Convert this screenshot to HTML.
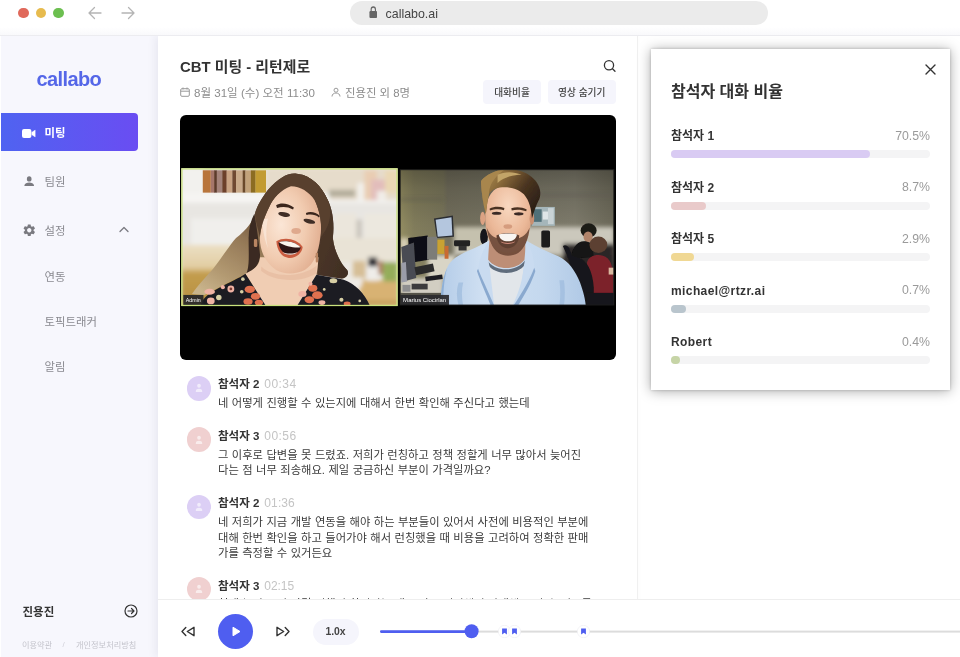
<!DOCTYPE html>
<html lang="ko">
<head>
<meta charset="utf-8">
<title>callabo</title>
<style>
*{box-sizing:border-box;margin:0;padding:0}
html,body{width:960px;height:657px;overflow:hidden;background:#fff}
body{font-family:"Liberation Sans","Noto Sans CJK KR",sans-serif;color:#333;position:relative;-webkit-font-smoothing:antialiased}
.abs{position:absolute}
.t{position:absolute;white-space:nowrap;line-height:1}
/* title bar */
#chrome{left:0;top:0;width:960px;height:36px;background:linear-gradient(#fff 0,#fff 27px,#f9f9fb 35px);border-bottom:1px solid #ececf0;z-index:5}
.dot{position:absolute;top:7.6px;width:10.5px;height:10.5px;border-radius:50%}
#url{left:350px;top:1px;width:418px;height:24px;border-radius:12px;background:#ebebeb}
/* sidebar */
#side{left:1px;top:36px;width:157px;height:621px;background:#f7f7fd}
#active{left:1px;top:113px;width:137px;height:38px;border-radius:0 4px 4px 0;background:linear-gradient(90deg,#4f63f1 0%,#6a4df2 100%)}
.nav{font-size:11.4px;color:#8a8a90}
/* main */
#main{left:158px;top:36px;width:479px;height:621px;background:#fff;box-shadow:-3px 0 8px rgba(40,40,90,.07)}
#vdiv{left:637px;top:36px;width:1px;height:563px;background:#f0f0f0}
#video{left:180px;top:115px;width:436px;height:245px;background:#000;border-radius:6px;overflow:hidden}
.btn{position:absolute;top:80px;height:24px;border-radius:4px;background:#f5f5fc;font-size:9.7px;color:#444;text-align:center;line-height:26px;font-weight:500;white-space:nowrap;overflow:hidden}
.av{position:absolute;left:186.6px;width:24.4px;height:24.4px;border-radius:50%}
.nm{font-size:11.5px;font-weight:700;color:#333}
.ts{font-size:12px;color:#c4c4c4;font-weight:400;letter-spacing:.45px;margin-left:1.8px}
.tx{position:absolute;left:218px;width:400px;white-space:nowrap;font-size:11.3px;word-spacing:.3px;line-height:15.5px;color:#3b3b3b}
/* player */
#player{left:158px;top:599px;width:802px;height:58px;background:#fff;border-top:1px solid #eeeeee}
/* panel */
#panel{left:651px;top:49px;width:299px;height:341px;background:#fff;box-shadow:0 1px 12px rgba(0,0,0,.34),0 0 3px rgba(0,0,0,.2);z-index:6}
.pl{font-size:12px;font-weight:700;color:#333}
.pp{font-size:12.3px;color:#9a9a9a;right:20px}
.track{position:absolute;left:20px;width:259px;height:8px;border-radius:4px;background:#f4f4f5}
.fill{position:absolute;left:0;top:0;height:8px;border-radius:4px}
</style>
</head>
<body><div id="root" style="position:absolute;left:0;top:0;width:960px;height:657px;will-change:transform;transform:translateZ(0)">
<!-- browser chrome -->
<div id="chrome" class="abs">
  <div class="dot" style="left:18.3px;background:#e0695b"></div>
  <div class="dot" style="left:35.8px;background:#e7bb4e"></div>
  <div class="dot" style="left:53.1px;background:#6cbf50"></div>
  <svg class="abs" style="left:88px;top:6px" width="48" height="14" viewBox="0 0 48 14" fill="none" stroke="#b4b4b4" stroke-width="1.3" stroke-linecap="round" stroke-linejoin="round"><path d="M13 7H1.5M6.5 1.5L1 7l5.5 5.5"/><path d="M34 7h11.5M40.5 1.5L46 7l-5.5 5.5"/></svg>
  <div id="url" class="abs">
    <svg class="abs" style="left:18.5px;top:5.4px" width="8.6" height="12" viewBox="0 0 10 12" preserveAspectRatio="none"><rect x="0.5" y="5" width="9" height="7" rx="1.2" fill="#666"/><path d="M2.5 5.5V3.5a2.5 2.5 0 0 1 5 0v2" fill="none" stroke="#666" stroke-width="1.3"/></svg>
    <div class="t" style="left:35.6px;top:6.6px;font-size:12.4px;color:#444">callabo.ai</div>
  </div>
</div>

<!-- sidebar -->
<div id="side" class="abs"></div>
<div class="t" style="left:36.5px;top:69.3px;font-size:20px;font-weight:700;color:#5567e8;letter-spacing:-0.6px">callabo</div>
<div id="active" class="abs"></div>
<svg class="abs" style="left:22.3px;top:128.5px" width="13.4" height="9" viewBox="0 0 13.4 9"><rect x="0" y="0" width="9.4" height="9" rx="2" fill="#fff"/><path d="M9.8 3.3l3.4-2.2v6.8L9.8 5.7z" fill="#fff" stroke="#fff" stroke-width=".4" stroke-linejoin="round"/></svg>
<div class="t" style="left:44.5px;top:128px;font-size:11.4px;font-weight:700;color:#fff">미팅</div>
<svg class="abs" style="left:23.7px;top:175.7px" width="10.4" height="10.8" viewBox="0 0 12 11" preserveAspectRatio="none"><circle cx="6" cy="3" r="2.7" fill="#7a7a80"/><path d="M0.5 11V9.5C0.5 7.5 3.5 6.5 6 6.5s5.5 1 5.5 3V11z" fill="#7a7a80"/></svg>
<div class="t nav" style="left:44.5px;top:177px">팀원</div>
<svg class="abs" style="left:21.5px;top:222.8px" width="14.5" height="14.5" viewBox="0 0 24 24"><path fill="#7a7a80" d="M19.140 12.940c.040-.300.060-.610.060-.940s-.020-.640-.070-.940l2.030-1.580a.490.490 0 0 0 .120-.610l-1.920-3.320a.488.488 0 0 0-.590-.220l-2.390.960c-.500-.380-1.030-.700-1.620-.940l-.360-2.540a.484.484 0 0 0-.480-.410h-3.840c-.240 0-.430.170-.470.410l-.360 2.540c-.590.240-1.130.570-1.620.940l-2.390-.960c-.220-.080-.470 0-.590.220L2.740 8.870c-.120.210-.080.470.12.610l2.030 1.580c-.050.3-.090.630-.090.940s.020.640.070.940l-2.030 1.580a.490.490 0 0 0-.120.610l1.920 3.320c.120.220.370.290.590.220l2.390-.960c.500.380 1.030.7 1.620.940l.360 2.540c.050.240.240.410.480.410h3.840c.240 0 .440-.170.470-.410l.360-2.540c.590-.240 1.130-.560 1.620-.940l2.390.960c.220.080.470 0 .590-.220l1.920-3.320c.120-.220.070-.470-.120-.610l-2.010-1.580zM12 15.6c-1.980 0-3.6-1.620-3.6-3.6s1.620-3.6 3.6-3.6 3.6 1.620 3.6 3.6-1.620 3.6-3.6 3.6z"/></svg>
<div class="t nav" style="left:44.5px;top:226px">설정</div>
<svg class="abs" style="left:119px;top:226px" width="10" height="7" viewBox="0 0 10 7" fill="none" stroke="#7a7a80" stroke-width="1.3" stroke-linecap="round" stroke-linejoin="round"><path d="M1 5.5L5 1.5l4 4"/></svg>
<div class="t nav" style="left:44.5px;top:271.5px">연동</div>
<div class="t nav" style="left:44.5px;top:316.5px">토픽트래커</div>
<div class="t nav" style="left:44.5px;top:362px">알림</div>
<div class="t" style="left:22.5px;top:606.5px;font-size:11.5px;font-weight:700;color:#333">진용진</div>
<svg class="abs" style="left:124px;top:604px" width="14" height="14" viewBox="0 0 14 14" fill="none" stroke="#333" stroke-width="1.2" stroke-linecap="round" stroke-linejoin="round"><circle cx="7" cy="7" r="6"/><path d="M4 7h6M7.5 4.5L10 7l-2.5 2.5"/></svg>
<div class="t" style="left:22px;top:642px;font-size:8.2px;color:#c4c4cc">이용약관</div>
<div class="t" style="left:62.5px;top:641px;font-size:8px;color:#d0d0d8">/</div>
<div class="t" style="left:76px;top:642px;font-size:8.2px;color:#c4c4cc">개인정보처리방침</div>

<!-- main -->
<div id="main" class="abs"></div>
<div id="vdiv" class="abs"></div>
<div class="t" style="left:180px;top:59.5px;font-size:14.9px;font-weight:700;color:#333">CBT 미팅 - 리턴제로</div>
<svg class="abs" style="left:180px;top:87px" width="10" height="10" viewBox="0 0 10 10" fill="none" stroke="#999" stroke-width="1"><rect x="0.7" y="1.7" width="8.6" height="7.6" rx="1.2"/><path d="M0.7 4.2h8.6M3 0.5v2M7 0.5v2"/></svg>
<div class="t" style="left:194px;top:87.5px;font-size:11.55px;color:#8c8c8c">8월 31일 (수) 오전 11:30</div>
<svg class="abs" style="left:331px;top:87px" width="10" height="10" viewBox="0 0 10 10" fill="none" stroke="#999" stroke-width="1"><circle cx="5" cy="3.2" r="2"/><path d="M1 9.5c0-2.2 1.8-3.5 4-3.5s4 1.3 4 3.5"/></svg>
<div class="t" style="left:345px;top:87.5px;font-size:11.4px;color:#8c8c8c">진용진 외 8명</div>
<svg class="abs" style="left:603px;top:59px" width="14" height="14" viewBox="0 0 14 14" fill="none" stroke="#333" stroke-width="1.3" stroke-linecap="round"><circle cx="6" cy="6.2" r="4.6"/><path d="M9.5 9.7l2.5 2.5"/></svg>
<div class="btn" style="left:483px;width:58px">대화비율</div>
<div class="btn" style="left:547.5px;width:68.5px">영상 숨기기</div>

<div id="video" class="abs"><!--PHOTOS-->
<svg class="abs" style="left:1px;top:53px" width="220" height="140" viewBox="0 0 1920 1222">
<defs>
<filter id="bA" x="-5%" y="-5%" width="110%" height="110%"><feGaussianBlur stdDeviation="18"/></filter>
<filter id="bB" x="-5%" y="-5%" width="110%" height="110%"><feGaussianBlur stdDeviation="5"/></filter>
<filter id="bC" x="-5%" y="-5%" width="110%" height="110%"><feGaussianBlur stdDeviation="3"/></filter>
<linearGradient id="hL1" x1=".9" y1="0" x2=".1" y2="1"><stop offset="0" stop-color="#4a3427"/><stop offset=".4" stop-color="#5e4533"/><stop offset=".6" stop-color="#927655"/><stop offset=".85" stop-color="#b39a72"/><stop offset="1" stop-color="#c9b48c"/></linearGradient>
<linearGradient id="hL2" x1="0" y1="0" x2="1" y2="1"><stop offset="0" stop-color="#57402f"/><stop offset="1" stop-color="#3f2d22"/></linearGradient>
<linearGradient id="tL" x1="0" y1="0" x2="0" y2="1"><stop offset="0" stop-color="#ebdfc4"/><stop offset=".36" stop-color="#e2cda2"/><stop offset=".46" stop-color="#c39d4e"/><stop offset="1" stop-color="#b78f40"/></linearGradient>
<radialGradient id="fL" cx=".35" cy=".45" r=".8"><stop offset="0" stop-color="#fbe6d6"/><stop offset=".5" stop-color="#f1cbb0"/><stop offset="1" stop-color="#dba283"/></radialGradient>
<clipPath id="cL"><rect x="3" y="3" width="1887" height="1202"/></clipPath>
</defs>
<g clip-path="url(#cL)">
<rect x="0" y="0" width="1920" height="1222" fill="#ebe8e3"/>
<g filter="url(#bA)">
  <rect x="0" y="0" width="200" height="230" fill="#f2f1ee"/>
  <rect x="740" y="0" width="1180" height="290" fill="#e6dccb"/>
  <rect x="0" y="215" width="1300" height="90" fill="#f5f4f2"/>
  <rect x="1280" y="280" width="640" height="105" fill="#f4f3f1"/>
  <rect x="0" y="305" width="1920" height="370" fill="#e8e6e2"/>
  <rect x="90" y="440" width="560" height="230" fill="#f0efec"/>
  <rect x="1350" y="400" width="180" height="420" fill="#ebe6dc"/>
  <rect x="1600" y="400" width="290" height="420" fill="#ece8df"/>
  <rect x="1530" y="450" width="50" height="260" fill="#cbc6bd"/>
  <rect x="1290" y="190" width="230" height="62" fill="#b3ad9b"/>
  <rect x="1540" y="130" width="62" height="150" fill="#f2f0ec"/>
  <rect x="1600" y="20" width="110" height="260" fill="#e9cdb2"/>
  <rect x="1660" y="100" width="120" height="180" fill="#e2bdbb"/>
  <rect x="1780" y="20" width="110" height="200" fill="#ead8b4"/>
  <rect x="1710" y="200" width="80" height="80" fill="#f1ede8"/>
  <rect x="0" y="671" width="640" height="540" fill="url(#tL)"/>
  <rect x="1300" y="611" width="600" height="210" fill="#e9e3d6"/>
  <rect x="1560" y="981" width="340" height="230" fill="#d8b273"/>
  <rect x="1560" y="1150" width="340" height="60" fill="#c9a460"/>
  <rect x="1500" y="811" width="112" height="155" fill="#d6be96"/>
  <rect x="1626" y="860" width="96" height="125" fill="#efede9"/>
  <rect x="1636" y="780" width="76" height="80" fill="#2c2b31"/>
  <rect x="1722" y="811" width="42" height="120" fill="#ab7d5e"/>
  <rect x="1764" y="821" width="126" height="170" fill="#94ad5a"/>
  <rect x="1470" y="955" width="110" height="80" fill="#efece6"/>
</g>
<g filter="url(#bB)">
  <rect x="190" y="20" width="70" height="195" fill="#b8743b"/>
  <rect x="260" y="20" width="35" height="195" fill="#a5766a"/>
  <rect x="290" y="20" width="24" height="195" fill="#5c3a2b"/>
  <rect x="312" y="20" width="50" height="195" fill="#a4837a"/>
  <rect x="360" y="20" width="40" height="195" fill="#6d4129"/>
  <rect x="398" y="20" width="52" height="195" fill="#c9a383"/>
  <rect x="448" y="20" width="34" height="195" fill="#6f4a30"/>
  <rect x="480" y="20" width="60" height="195" fill="#c9aa8a"/>
  <rect x="538" y="20" width="26" height="195" fill="#6b4a2b"/>
  <rect x="562" y="20" width="50" height="195" fill="#c2a27a"/>
  <rect x="610" y="20" width="42" height="195" fill="#8c6c22"/>
  <rect x="650" y="20" width="92" height="195" fill="#c29b33"/>
  <!-- hair (back mass) -->
  <path d="M1010 50 C930 40 850 90 760 190 C700 270 665 330 645 400 C625 470 575 540 480 611 C420 680 360 780 280 880 C220 950 160 1010 95 1100 L200 1110 L560 925 L700 900 L1180 930 L1400 965 C1450 960 1470 920 1450 890 C1400 840 1340 740 1325 611 C1340 500 1325 380 1290 300 C1250 200 1180 100 1060 58Z" fill="url(#hL1)"/>
  <path d="M1060 58 C1180 100 1250 200 1290 300 C1325 380 1340 500 1325 611 C1340 740 1400 840 1450 890 C1470 920 1450 960 1400 965 L1190 935 L1200 611 L1230 500 L1100 200Z" fill="url(#hL2)"/>
  <path d="M640 400 C660 520 680 640 690 760 C690 830 640 900 570 925 C600 850 590 760 590 611 C590 530 610 460 640 400Z" fill="#3a2a20"/>
  <!-- neck / chest -->
  <path d="M690 780 L1200 780 C1195 850 1190 900 1182 932 L1012 1205 L742 1205 L562 922 C640 890 685 850 690 780Z" fill="#f0cdb3"/>
  <path d="M700 860 C800 960 1050 960 1185 850 L1180 920 C1050 1000 820 1000 700 900Z" fill="#dcaa8c" fill-opacity=".35"/>
  <!-- face -->
  <path d="M960 150 C870 180 800 270 770 340 C730 420 700 500 688 611 C690 720 730 820 830 890 C900 930 1000 930 1080 890 C1160 840 1200 740 1215 611 C1235 500 1215 380 1165 270 C1120 200 1040 150 960 150Z" fill="url(#fL)"/>
  <path d="M700 450 C720 560 730 640 760 700 C740 620 740 520 760 440Z" fill="#fdf3ec" fill-opacity=".5"/>
  <!-- hair front -->
  <path d="M1010 50 C930 40 850 90 760 190 C700 270 665 330 645 400 C650 470 670 520 688 600 C700 500 730 420 770 340 C800 270 870 190 960 160 C1040 160 1120 210 1165 280 C1210 370 1232 480 1222 600 C1290 520 1320 420 1290 300 C1250 200 1180 100 1060 58Z" fill="#59412f"/>
  <!-- brows / eyes / nose -->
  <path d="M830 325 C870 300 930 305 985 345 L978 362 C930 335 880 335 838 350Z" fill="#3a261d"/>
  <path d="M1090 392 C1130 375 1180 385 1212 420 L1204 432 C1175 405 1135 402 1095 410Z" fill="#3a261d"/>
  <ellipse cx="900" cy="405" rx="52" ry="20" fill="#3f2d27" transform="rotate(10 900 405)"/>
  <ellipse cx="1120" cy="465" rx="52" ry="19" fill="#3f2d27" transform="rotate(14 1120 465)"/>
  <ellipse cx="1005" cy="550" rx="42" ry="26" fill="#dfa98d"/>
  <!-- mouth -->
  <path d="M832 640 C900 600 1010 615 1062 690 C1055 745 1005 790 940 785 C880 778 840 730 832 640Z" fill="#c95c40"/>
  <path d="M850 650 C905 625 1000 640 1045 695 C1035 735 995 758 940 755 C890 748 860 710 850 650Z" fill="#2e1414"/>
  <path d="M855 648 C905 628 1000 644 1042 692 C1000 700 905 685 855 648Z" fill="#faf5ee"/>
  <path d="M885 735 C920 750 980 752 1015 735 C1000 762 910 765 885 735Z" fill="#f1e6de"/>
  <!-- earrings -->
  <rect x="636" y="620" width="30" height="70" rx="12" fill="#b98562"/>
  <rect x="1176" y="740" width="20" height="85" rx="9" fill="#b98562"/>
  <!-- dress -->
  <path d="M170 1210 C180 1130 260 1080 400 1010 C480 970 530 945 562 922 L742 1205Z" fill="#1b1a24"/>
  <path d="M1012 1205 L1182 932 C1260 950 1350 955 1420 975 C1520 1010 1600 1090 1650 1205Z" fill="#1b1a24"/>
  <g fill="#e0714f">
    <ellipse cx="600" cy="1060" rx="45" ry="32"/><ellipse cx="650" cy="1120" rx="40" ry="30"/><ellipse cx="585" cy="1165" rx="40" ry="28"/><ellipse cx="680" cy="1175" rx="36" ry="26"/>
    <ellipse cx="1150" cy="1050" rx="40" ry="30"/><ellipse cx="1190" cy="1110" rx="46" ry="34"/><ellipse cx="1120" cy="1150" rx="42" ry="30"/><ellipse cx="1450" cy="1185" rx="30" ry="20"/>
  </g>
  <g fill="#efb3a4">
    <circle cx="435" cy="1056" r="30"/><ellipse cx="250" cy="1080" rx="46" ry="26"/><ellipse cx="260" cy="1160" rx="34" ry="30"/><circle cx="365" cy="1040" r="18"/>
    <ellipse cx="1060" cy="1100" rx="36" ry="26"/><ellipse cx="1230" cy="1175" rx="30" ry="20"/><circle cx="1130" cy="1010" r="18"/>
  </g>
  <g fill="#d7cfa4">
    <circle cx="330" cy="1131" r="24"/><circle cx="540" cy="970" r="16"/><circle cx="530" cy="1080" r="16"/><ellipse cx="1330" cy="985" rx="34" ry="22"/><circle cx="1400" cy="1150" r="18"/><circle cx="1250" cy="1060" r="12"/><circle cx="1560" cy="1160" r="12"/>
  </g>
  <circle cx="435" cy="1056" r="12" fill="#7a3a30"/>
</g>
<rect x="20" y="1108" width="176" height="92" fill="#242428" fill-opacity=".9"/>
<text x="42" y="1172" font-family="Liberation Sans, sans-serif" font-size="46" fill="#fff">Admin</text>
</g>
<rect x="8" y="8" width="1877" height="1192" fill="none" stroke="#c9e27c" stroke-width="11"/>
</svg>

<svg class="abs" style="left:219px;top:53px" width="220" height="140" viewBox="0 0 1920 1222">
<defs>
<linearGradient id="wR" x1="0" y1="0" x2="1" y2="0"><stop offset="0" stop-color="#9a9466"/><stop offset=".07" stop-color="#86815f"/><stop offset=".2" stop-color="#7e7a5e"/><stop offset=".22" stop-color="#777360"/><stop offset=".45" stop-color="#7b7866"/><stop offset=".8" stop-color="#838070"/><stop offset="1" stop-color="#6e6b5a"/></linearGradient>
<linearGradient id="wRv" x1="0" y1="0" x2="0" y2="1"><stop offset="0" stop-color="#000" stop-opacity=".32"/><stop offset=".25" stop-color="#000" stop-opacity=".18"/><stop offset=".7" stop-color="#000" stop-opacity=".05"/><stop offset="1" stop-color="#000" stop-opacity="0"/></linearGradient>
<linearGradient id="hR" x1="0" y1="0" x2="1" y2=".6"><stop offset="0" stop-color="#b39458"/><stop offset=".35" stop-color="#8a6a3a"/><stop offset=".7" stop-color="#4a3420"/><stop offset="1" stop-color="#2e2218"/></linearGradient>
<linearGradient id="sR" x1="0" y1="0" x2="1" y2="0"><stop offset="0" stop-color="#b4cce8"/><stop offset=".3" stop-color="#d0e0f2"/><stop offset=".7" stop-color="#c4d8ee"/><stop offset="1" stop-color="#b0c9e6"/></linearGradient>
<radialGradient id="fR" cx=".5" cy=".3" r=".8"><stop offset="0" stop-color="#f8d8c0"/><stop offset=".55" stop-color="#ebb898"/><stop offset="1" stop-color="#c98f70"/></radialGradient>
<clipPath id="cR"><rect x="10" y="15" width="1865" height="1181"/></clipPath>
</defs>
<g clip-path="url(#cR)">
<rect x="0" y="0" width="1920" height="1222" fill="url(#wR)"/>
<rect x="0" y="0" width="1920" height="700" fill="url(#wRv)"/>
<g filter="url(#bA)">
  
  <rect x="1230" y="230" width="650" height="14" fill="#5e5b54"/>
  <rect x="10" y="270" width="380" height="12" fill="#5b5848"/>
  <rect x="480" y="515" width="1400" height="245" fill="#cbc8bc"/>
  <rect x="480" y="515" width="280" height="200" fill="#c5c1ae"/>
  <rect x="10" y="611" width="70" height="240" fill="#d9d1b8"/>
  <rect x="250" y="760" width="240" height="200" fill="#d9d5c6"/>
  <rect x="10" y="960" width="380" height="160" fill="#d2cec2"/>
  <rect x="1810" y="680" width="70" height="330" fill="#a59684"/>
  <rect x="1430" y="660" width="450" height="540" fill="#2a2828"/>
</g>
<g filter="url(#bB)">
  <!-- left desk clutter -->
  <path d="M305 440 L470 415 L480 600 L330 611Z" fill="#2b2d33"/>
  <path d="M320 452 L458 430 L466 590 L338 600Z" fill="#b4c6de"/>
  <path d="M80 611 L250 590 L260 800 L90 830Z" fill="#0f0f13"/>
  <rect x="245" y="600" width="88" height="200" fill="#7b7b78"/>
  <rect x="335" y="625" width="62" height="125" fill="#c9a233"/>
  <rect x="398" y="680" width="34" height="112" fill="#c96a32"/>
  <rect x="480" y="630" width="140" height="52" rx="10" fill="#242424"/>
  <rect x="520" y="680" width="70" height="40" fill="#333"/>
  <path d="M20 690 L130 650 L150 960 L40 990Z" fill="#4a4b52"/>
  <path d="M20 830 L60 820 L70 990 L20 1000Z" fill="#9a9ca8"/>
  <rect x="140" y="850" width="165" height="70" fill="#2a2a2c" transform="rotate(-12 220 885)"/>
  <rect x="230" y="940" width="150" height="40" fill="#1f1f22" transform="rotate(-8 300 960)"/>
  <rect x="30" y="1020" width="70" height="60" fill="#8f8f90"/>
  <rect x="110" y="1010" width="140" height="50" fill="#3b3b3d"/>
  <rect x="10" y="1090" width="360" height="110" fill="#555248"/>
  <!-- wall picture, speaker -->
  <rect x="1160" y="340" width="200" height="165" fill="#a5b6ba"/>
  <rect x="1175" y="360" width="70" height="110" fill="#4f6f78"/>
  <rect x="1255" y="380" width="60" height="70" fill="#dfe6e8"/>
  <rect x="1300" y="350" width="50" height="140" fill="#c9d3d6"/>
  <rect x="1242" y="545" width="76" height="148" rx="14" fill="#1c1c1e"/>
  <!-- people on right -->
  <ellipse cx="1655" cy="545" rx="70" ry="62" fill="#1f1b19"/>
  <ellipse cx="1650" cy="600" rx="40" ry="45" fill="#b1846a"/>
  <path d="M1500 790 C1510 690 1560 630 1630 640 L1690 660 L1700 780Z" fill="#131313"/>
  <ellipse cx="1740" cy="670" rx="78" ry="72" fill="#5b4030"/>
  <path d="M1640 830 C1650 770 1720 750 1780 765 C1840 780 1870 850 1870 960 L1870 1130 L1690 1130Z" fill="#7c222b"/>
  <path d="M1430 680 C1470 660 1490 700 1510 760 L1560 780 C1640 800 1690 900 1700 1040 L1700 1196 L1540 1196 C1545 1000 1500 820 1430 680Z" fill="#18181a"/>
  <rect x="1830" y="870" width="50" height="60" fill="#d9b9a0"/>
  <rect x="1640" y="1090" width="240" height="110" fill="#17171d"/>
  <ellipse cx="742" cy="600" rx="34" ry="70" fill="#17171a"/>
  <!-- shirt -->
  <path d="M360 1200 C365 1080 380 960 420 870 C450 800 520 760 600 725 C680 690 740 660 790 630 L1110 630 C1180 680 1280 720 1390 770 C1480 810 1540 900 1580 1000 C1610 1080 1625 1150 1630 1200Z" fill="url(#sR)"/>
  <path d="M420 870 C395 960 385 1080 385 1200 L360 1200 C365 1080 380 960 420 870Z" fill="#8fb0d6"/>
  <path d="M520 1000 C500 1060 500 1130 520 1200 L560 1200 C545 1130 545 1060 560 1000Z" fill="#9dbbdd" fill-opacity=".7"/>
  <path d="M1440 980 C1450 1050 1450 1130 1440 1200 L1400 1200 C1410 1130 1410 1050 1400 980Z" fill="#9dbbdd" fill-opacity=".7"/>
  <!-- t-shirt -->
  <path d="M790 860 C850 920 1010 925 1090 850 C1080 980 1040 1100 990 1200 L830 1200 C800 1090 790 980 790 860Z" fill="#e2e6ea"/>
  <path d="M768 800 C830 905 1020 920 1105 800 L1100 845 C1020 945 840 935 775 845Z" fill="#5f6c7c"/>
  <!-- collar flaps -->
  <path d="M790 630 C740 700 700 790 690 880 L720 1000 C760 1080 800 1150 830 1200 L790 860 C775 800 780 700 790 630Z" fill="#c9dbf0"/>
  <path d="M690 880 C720 960 780 1080 830 1200 L800 1200 C760 1100 710 990 680 900Z" fill="#8aa9cf"/>
  <path d="M1110 630 C1150 690 1180 780 1180 870 C1160 920 1120 960 1090 1000 L1060 1100 L1090 850 C1105 790 1110 700 1110 630Z" fill="#c9dbf0"/>
  <path d="M1180 870 C1150 960 1080 1080 1000 1200 L1040 1200 C1100 1100 1160 1000 1190 900Z" fill="#8aa9cf"/>
  <!-- neck -->
  <path d="M790 620 L1100 620 C1105 700 1100 760 1095 800 C1020 900 850 895 778 800 C780 740 785 690 790 620Z" fill="#bd8e76"/>
  <!-- face -->
  <path d="M940 150 C850 150 780 220 760 330 C745 430 750 540 790 640 C830 720 890 760 950 762 C1010 760 1070 720 1110 640 C1150 540 1165 430 1150 330 C1130 220 1040 150 940 150Z" fill="url(#fR)"/>
  <ellipse cx="730" cy="440" rx="22" ry="58" fill="#dba283"/>
  <ellipse cx="1160" cy="440" rx="20" ry="55" fill="#c98f70"/>
  <!-- beard -->
  <path d="M765 520 C780 620 810 700 870 745 C920 772 985 772 1040 742 C1100 700 1130 620 1140 520 C1120 570 1090 600 1050 610 C1000 560 890 560 850 610 C810 600 785 570 765 520Z" fill="#6a4837" fill-opacity=".9"/>
  <path d="M850 590 C900 560 1000 560 1050 590 C1045 660 1000 700 950 700 C900 700 855 660 850 590Z" fill="#5f3f30"/>
  <path d="M870 580 C920 568 990 568 1030 580 C1020 625 990 640 950 640 C910 640 880 625 870 580Z" fill="#f8f5f1"/>
  <path d="M885 640 C920 660 980 660 1015 640 C1000 672 900 672 885 640Z" fill="#cf8a7a"/>
  <!-- brows / eyes -->
  <path d="M790 355 C830 335 880 335 920 350 L916 368 C880 356 830 358 794 372Z" fill="#4a3222"/>
  <path d="M980 352 C1020 335 1075 340 1115 362 L1110 378 C1075 362 1020 360 984 370Z" fill="#4a3222"/>
  <ellipse cx="852" cy="395" rx="42" ry="14" fill="#3b2b25"/>
  <ellipse cx="1045" cy="400" rx="42" ry="14" fill="#3b2b25"/>
  <ellipse cx="950" cy="510" rx="38" ry="20" fill="#d59c7e"/>
  <!-- hair -->
  <path d="M715 115 C760 60 840 20 930 12 C1040 5 1130 40 1190 110 C1230 160 1245 220 1225 270 C1210 300 1195 330 1180 380 C1170 410 1165 430 1160 440 C1155 360 1140 290 1090 230 C1040 180 960 160 880 170 C830 178 800 200 785 230 C770 290 765 350 758 400 C735 320 720 220 715 115Z" fill="url(#hR)"/>
  <path d="M715 115 C760 60 840 20 930 12 C880 40 830 90 800 150 C790 175 786 200 785 230 C770 290 765 350 758 400 C735 320 720 220 715 115Z" fill="#a8864e"/>
  <path d="M860 60 C920 30 1000 30 1070 60 C1000 60 920 80 860 130Z" fill="#c2a468"/>
</g>
<rect x="12" y="1108" width="424" height="90" fill="#2a2a2e" fill-opacity=".92"/>
<text x="36" y="1170" font-family="Liberation Sans, sans-serif" font-size="45" fill="#fff" textLength="376" lengthAdjust="spacingAndGlyphs">Marius Ciocirlan</text>
</g>
<rect x="10" y="15" width="1865" height="1181" fill="none" stroke="#1c1c1c" stroke-width="8"/>
</svg>
<!--/PHOTOS--></div>

<!-- transcript -->
<div id="transcript"><!--TRANSCRIPT-->
<div class="av" style="top:376.2px;background:#dccff5"><svg style="position:absolute;left:8.2px;top:7.2px" width="8" height="9.4" viewBox="0 0 10 11" preserveAspectRatio="none"><circle cx="5" cy="3.2" r="2.3" fill="#fff" fill-opacity=".6"/><path d="M1 10.5V9.3C1 7.4 3 6.6 5 6.6s4 .8 4 2.7v1.2z" fill="#fff" fill-opacity=".6"/></svg></div>
<div class="t nm" style="left:218px;top:378.3px">참석자 2 <span class="ts" style="letter-spacing:0.45px">00:34</span></div>
<div class="tx" style="top:396.1px">네 어떻게 진행할 수 있는지에 대해서 한번 확인해 주신다고 했는데</div>
<div class="av" style="top:427.4px;background:#f0d0d0"><svg style="position:absolute;left:8.2px;top:7.2px" width="8" height="9.4" viewBox="0 0 10 11" preserveAspectRatio="none"><circle cx="5" cy="3.2" r="2.3" fill="#fff" fill-opacity=".6"/><path d="M1 10.5V9.3C1 7.4 3 6.6 5 6.6s4 .8 4 2.7v1.2z" fill="#fff" fill-opacity=".6"/></svg></div>
<div class="t nm" style="left:218px;top:429.5px">참석자 3 <span class="ts" style="letter-spacing:0.45px">00:56</span></div>
<div class="tx" style="top:447.8px">그 이후로 답변을 못 드렸죠. 저희가 런칭하고 정책 정할게 너무 많아서 늦어진</div>
<div class="tx" style="top:463.3px">다는 점 너무 죄송해요. 제일 궁금하신 부분이 가격일까요?</div>
<div class="av" style="top:494.7px;background:#dccff5"><svg style="position:absolute;left:8.2px;top:7.2px" width="8" height="9.4" viewBox="0 0 10 11" preserveAspectRatio="none"><circle cx="5" cy="3.2" r="2.3" fill="#fff" fill-opacity=".6"/><path d="M1 10.5V9.3C1 7.4 3 6.6 5 6.6s4 .8 4 2.7v1.2z" fill="#fff" fill-opacity=".6"/></svg></div>
<div class="t nm" style="left:218px;top:497.1px">참석자 2 <span class="ts" style="letter-spacing:0.1px">01:36</span></div>
<div class="tx" style="top:515.1px">네 저희가 지금 개발 연동을 해야 하는 부분들이 있어서 사전에 비용적인 부분에</div>
<div class="tx" style="top:530.6px">대해 한번 확인을 하고 들어가야 해서 런칭했을 때 비용을 고려하여 정확한 판매</div>
<div class="tx" style="top:546.1px">가를 측정할 수 있거든요</div>
<div class="av" style="top:577.0px;background:#f0d0d0"><svg style="position:absolute;left:8.2px;top:7.2px" width="8" height="9.4" viewBox="0 0 10 11" preserveAspectRatio="none"><circle cx="5" cy="3.2" r="2.3" fill="#fff" fill-opacity=".6"/><path d="M1 10.5V9.3C1 7.4 3 6.6 5 6.6s4 .8 4 2.7v1.2z" fill="#fff" fill-opacity=".6"/></svg></div>
<div class="t nm" style="left:218px;top:580.2px">참석자 3 <span class="ts" style="letter-spacing:-0.05px">02:15</span></div>
<div class="tx" style="top:596.8px">현재 논의 중인 가격 정책이 확정되는 대로 바로 정리해서 안내해 드릴 수 있도록</div>
<!--/TRANSCRIPT--></div>

<!-- player -->
<div id="player" class="abs"><!--PLAYER-->
<svg class="abs" style="left:23px;top:25px" width="15" height="13" viewBox="0 0 15 13" fill="none" stroke="#333" stroke-width="1.4" stroke-linejoin="round" stroke-linecap="round"><path d="M4.8 2.5L1 6.5l3.8 4"/><path d="M13 2.3v8.4L6.3 6.5z"/></svg>
<div class="abs" style="left:60px;top:14px;width:35px;height:35px;border-radius:50%;background:#4f5ef0"></div>
<svg class="abs" style="left:73.5px;top:26px" width="9" height="11" viewBox="0 0 9 11"><path d="M1 1.2v8.6L8 5.5z" fill="#fff" stroke="#fff" stroke-width="1" stroke-linejoin="round"/></svg>
<svg class="abs" style="left:117px;top:25px" width="15" height="13" viewBox="0 0 15 13" fill="none" stroke="#333" stroke-width="1.4" stroke-linejoin="round" stroke-linecap="round"><path d="M10.2 2.5L14 6.5l-3.8 4"/><path d="M2 2.3v8.4L8.7 6.5z"/></svg>
<div class="abs" style="left:154.5px;top:19px;width:46px;height:26px;border-radius:13px;background:#f5f5fc;text-align:center;line-height:26px;font-size:10.4px;font-weight:700;color:#444">1.0x</div>
<svg class="abs" style="left:222px;top:20px" width="580" height="24" viewBox="0 0 580 24"><rect x="0" y="10.6" width="580" height="2" fill="#dcdcdc"/><rect x="0" y="10.2" width="92" height="2.7" rx="1.3" fill="#4f5ef0"/><circle cx="91.6" cy="11.3" r="7" fill="#4f5ef0"/></svg>
<svg class="abs" style="left:340.0px;top:24.6px" width="13" height="13" viewBox="0 0 13 13"><circle cx="6.5" cy="6.5" r="6.2" fill="#fff" stroke="#ededf2" stroke-width=".6"/><path d="M4.1 3.5h4.8v5.9L6.5 7.8 4.1 9.4z" fill="#4f5ef0"/></svg>
<svg class="abs" style="left:349.75px;top:24.6px" width="13" height="13" viewBox="0 0 13 13"><circle cx="6.5" cy="6.5" r="6.2" fill="#fff" stroke="#ededf2" stroke-width=".6"/><path d="M4.1 3.5h4.8v5.9L6.5 7.8 4.1 9.4z" fill="#4f5ef0"/></svg>
<svg class="abs" style="left:418.5px;top:24.6px" width="13" height="13" viewBox="0 0 13 13"><circle cx="6.5" cy="6.5" r="6.2" fill="#fff" stroke="#ededf2" stroke-width=".6"/><path d="M4.1 3.5h4.8v5.9L6.5 7.8 4.1 9.4z" fill="#4f5ef0"/></svg>
<!--/PLAYER--></div>

<!-- panel -->
<div id="panel" class="abs"><!--PANEL-->
<svg class="abs" style="left:274px;top:15px" width="11" height="11" viewBox="0 0 11 11" fill="none" stroke="#333" stroke-width="1.4" stroke-linecap="round"><path d="M1 1l9 9M10 1l-9 9"/></svg>
<div class="t" style="left:20px;top:34.5px;font-size:16px;font-weight:700;color:#333">참석자 대화 비율</div>
<div class="t pl" style="left:20px;top:81.1px">참석자 1</div>
<div class="t pp" style="top:80.8px">70.5%</div>
<div class="track" style="top:101.2px"><div class="fill" style="width:198.5px;background:#d9cbf3"></div></div>
<div class="t pl" style="left:20px;top:132.5px">참석자 2</div>
<div class="t pp" style="top:132.2px">8.7%</div>
<div class="track" style="top:152.6px"><div class="fill" style="width:35px;background:#e9caca"></div></div>
<div class="t pl" style="left:20px;top:184.0px">참석자 5</div>
<div class="t pp" style="top:183.7px">2.9%</div>
<div class="track" style="top:204.1px"><div class="fill" style="width:22.5px;background:#f0d894"></div></div>
<div class="t pl" style="left:20px;top:235.5px;letter-spacing:.4px">michael@rtzr.ai</div>
<div class="t pp" style="top:235.2px">0.7%</div>
<div class="track" style="top:255.6px"><div class="fill" style="width:15px;background:#b9c5cd"></div></div>
<div class="t pl" style="left:20px;top:286.9px;letter-spacing:.4px">Robert</div>
<div class="t pp" style="top:286.6px">0.4%</div>
<div class="track" style="top:307.0px"><div class="fill" style="width:8.5px;background:#c6d4a6"></div></div>
<!--/PANEL--></div>
</div></body>
</html>
